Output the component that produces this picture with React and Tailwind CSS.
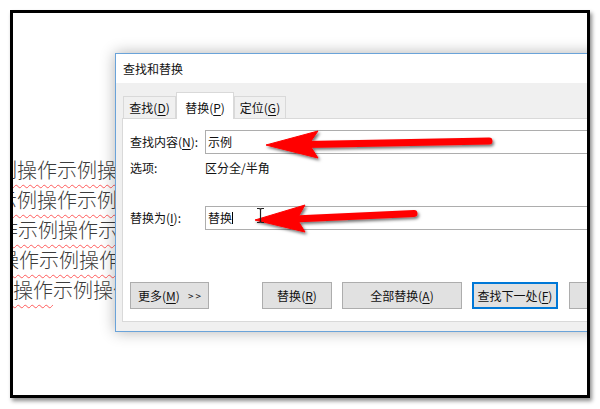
import React from 'react';

const FONT = { fontFamily: '"Noto Sans CJK SC", "Noto Sans", sans-serif' };

// letter with an access-key underline
const Key = ({ k }) => (
    <>
        (<span className="underline underline-offset-2">{k}</span>)
    </>
);

const Tab = ({ label, k, active, w }) =>
    active ? (
        <div className={`${w} h-[27px] -mb-[1px] pt-[4px] relative z-10 bg-white border border-b-0 border-[#d9d9d9] flex items-center justify-center`}>
            {label}<Key k={k} />
        </div>
    ) : (
        <div className={`${w} h-[22px] bg-[#f0f0f0] border border-b-0 border-[#d9d9d9] flex items-center justify-center`}>
            {label}<Key k={k} />
        </div>
    );

const Button = ({ children, w, primary, left }) => (
    <div
        className={`${w} h-[27px] shrink-0 flex items-center ${left ? 'justify-start pl-[7px]' : 'justify-center'} bg-[#e1e1e1] ${
            primary ? 'border-2 border-[#0078d7]' : 'border border-[#adadad]'
        }`}
    >
        {children}
    </div>
);

const DocLines = () => {
    const wavy = 'underline decoration-wavy decoration-[#ff5a5a] decoration-1 underline-offset-[6px]';
    return (
        <div className="pt-[142px] flex flex-col text-[20px] font-light leading-[30px] text-[#3c3c3c] whitespace-nowrap">
            <div className={`-ml-[16px] ${wavy}`}>例操作示例操作</div>
            <div className={`-ml-[16px] ${wavy}`}>示例操作示例操</div>
            <div className={`-ml-[15px] ${wavy}`}>作示例操作示例</div>
            <div className={`-ml-[14px] ${wavy}`}>操作示例操作示</div>
            <div>
                <span className={wavy}>操作</span>示例操作
            </div>
        </div>
    );
};

const Dialog = () => (
    <div className="absolute left-[102px] top-[40px] w-[520px] h-[279px] border border-[#6aa3d9] bg-[#f0f0f0] shadow-[0_0_14px_rgba(0,0,0,0.3)] flex flex-col text-[12px] text-[#111]">
        {/* title */}
        <div className="h-[29px] bg-white flex items-center pl-[7px]">查找和替换</div>

        {/* tabs */}
        <div className="h-[35px] flex items-end pl-[7px]">
            <Tab label="查找" k="D" w="w-[53px]" />
            <Tab label="替换" k="P" w="w-[58px]" active />
            <Tab label="定位" k="G" w="w-[52px]" />
        </div>

        {/* panel */}
        <div className="ml-[6px] h-[204px] bg-white border border-[#d9d9d9] pl-[7px] pt-[11px] flex flex-col">
            <div className="h-[24px] flex items-center">
                <div className="w-[75px]">查找内容<Key k="N" />:</div>
                <div className="w-[400px] h-[24px] border border-[#adadad] flex items-center pl-[2px]">示例</div>
            </div>
            <div className="mt-[5px] h-[18px] flex items-center">
                <div className="w-[75px]">选项:</div>
                <div>区分全/半角</div>
            </div>
            <div className="mt-[29px] h-[24px] flex items-center">
                <div className="w-[75px]">替换为<Key k="I" />:</div>
                <div className="w-[400px] h-[24px] border border-[#adadad] flex items-center pl-[2px]">
                    替换<span className="w-px h-[12px] bg-black" />
                </div>
            </div>
            <div className="mt-[52px] flex items-center">
                <Button w="w-[79px]" left>
                    更多<Key k="M" />
                    <span className="ml-[8px] text-[10px] tracking-[2px]">&gt;&gt;</span>
                </Button>
                <div className="w-[53px] shrink-0" />
                <Button w="w-[70px]">替换<Key k="R" /></Button>
                <div className="w-[10px] shrink-0" />
                <Button w="w-[120px]">全部替换<Key k="A" /></Button>
                <div className="w-[10px] shrink-0" />
                <Button w="w-[86px]" primary>查找下一处<Key k="F" /></Button>
                <div className="w-[11px] shrink-0" />
                <Button w="w-[70px]">关闭</Button>
            </div>
        </div>
    </div>
);

const Arrows = () => (
    <svg className="absolute left-0 top-0 pointer-events-none" width="600" height="409">
        <defs>
            <filter id="sh" x="-10%" y="-50%" width="120%" height="200%">
                <feDropShadow dx="1.5" dy="2" stdDeviation="1.6" floodColor="#000" floodOpacity="0.55" />
            </filter>
        </defs>
        <g filter="url(#sh)" fill="#ff0000" stroke="#ff0000">
            <line x1="489" y1="141" x2="306" y2="144.5" strokeWidth="7" strokeLinecap="round" />
            <polygon points="266,145 318,131 309,144 318,158" strokeWidth="1" strokeLinejoin="round" />
            <line x1="414" y1="213.5" x2="294" y2="219" strokeWidth="7" strokeLinecap="round" />
            <polygon points="255,220 305,205 297,219 305,232" strokeWidth="1" strokeLinejoin="round" />
        </g>
        {/* I-beam mouse cursor */}
        <g stroke="#222" strokeWidth="1.2" fill="none">
            <path d="M257 208.5 h2 q1 0 1.5 1 q.5 -1 1.5 -1 h2" />
            <path d="M260.5 209.5 v12" />
            <path d="M257 222.5 h2 q1 0 1.5 -1 q.5 1 1.5 1 h2" />
        </g>
    </svg>
);

export default function App() {
    return (
        <div className="relative w-[600px] h-[409px] bg-white overflow-hidden" style={FONT}>
            <div className="ml-[10px] mt-[10px] w-[580px] h-[388px] border-[3px] border-black bg-white relative overflow-hidden shadow-[2px_3px_4px_rgba(0,0,0,0.45)]">
                <DocLines />
                <Dialog />
            </div>
            <Arrows />
        </div>
    );
}
